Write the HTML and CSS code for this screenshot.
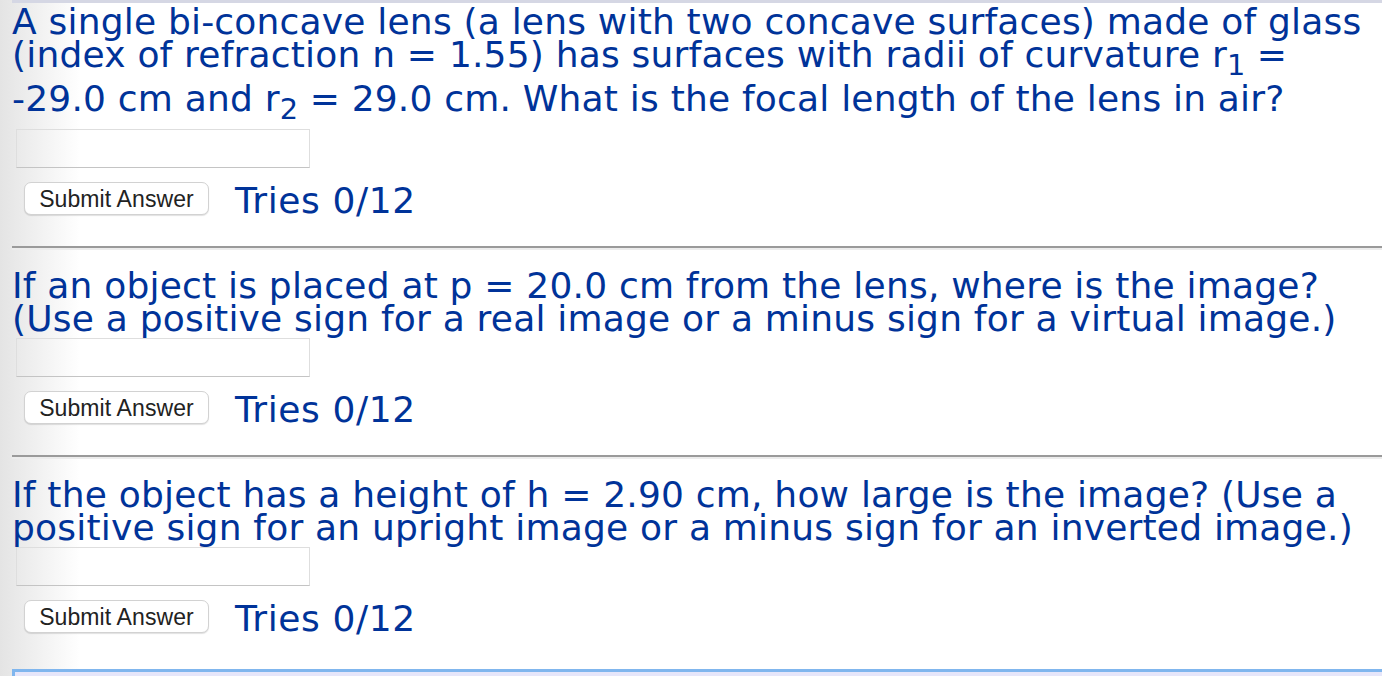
FILE: index.html
```html
<!DOCTYPE html>
<html lang="en">
<head>
<meta charset="utf-8">
<title>Lens problem</title>
<link rel="stylesheet" href="styles.css">
</head>
<body>
<div class="page">
  <div class="top-rule"></div>

  <section class="question">
    <p class="prompt">A single bi-concave lens (a lens with two concave surfaces) made of glass (index of refraction n = 1.55) has surfaces with radii of curvature r<sub>1</sub> = -29.0&nbsp;cm and r<sub>2</sub> = 29.0 cm. What is the focal length of the lens in air?</p>
    <input class="answer" type="text">
    <div class="actions">
      <button class="submit" type="button">Submit Answer</button>
      <span class="tries">Tries 0/12</span>
    </div>
  </section>
  <hr class="divider">

  <section class="question">
    <p class="prompt">If an object is placed at p = 20.0 cm from the lens, where is the image? (Use a positive sign for a real image or a minus sign for a virtual image.)</p>
    <input class="answer" type="text">
    <div class="actions">
      <button class="submit" type="button">Submit Answer</button>
      <span class="tries">Tries 0/12</span>
    </div>
  </section>
  <hr class="divider">

  <section class="question">
    <p class="prompt">If the object has a height of h = 2.90 cm, how large is the image? (Use a positive sign for an upright image or a minus sign for an inverted image.)</p>
    <input class="answer" type="text">
    <div class="actions">
      <button class="submit" type="button">Submit Answer</button>
      <span class="tries">Tries 0/12</span>
    </div>
  </section>

  <div class="next-box"></div>
</div>
</body>
</html>
```
FILE: styles.css
```css
html, body {
  margin: 0;
  padding: 0;
}

body {
  background: linear-gradient(to right, #e4e4e4 0, #ffffff 80px);
  min-height: 676px;
  overflow: hidden;
  font-family: "DejaVu Sans", Verdana, sans-serif;
  color: #003399;
}

.page {
  padding-left: 12px;
}

.top-rule {
  height: 3px;
  background: #d5d7e4;
}

.question {
  padding-top: 2px;
}

.prompt {
  margin: 0 16px 0 0;
  font-size: 36px;
  line-height: 33px;
  letter-spacing: 0.2px;
}

.prompt sub {
  font-size: 0.8em;
  letter-spacing: 0;
}

.answer {
  display: block;
  box-sizing: border-box;
  width: 294px;
  height: 39px;
  margin: 3px 0 0 4px;
  padding: 0 6px;
  background: transparent;
  border: 1px solid #dedede;
  border-bottom-color: #c4c4c4;
  border-radius: 0;
  font-size: 20px;
}

.actions {
  display: flex;
  align-items: flex-start;
  gap: 26px;
  margin: 14px 0 0 12px;
}

.submit {
  box-sizing: border-box;
  width: 185px;
  height: 33px;
  padding: 2px 0 0;
  background: #ffffff;
  border: 1px solid #d2d2d2;
  border-radius: 7px;
  box-shadow: 0 1px 1px rgba(0, 0, 0, 0.12);
  font-family: "Liberation Sans", Arial, sans-serif;
  font-size: 23px;
  letter-spacing: 0.1px;
  color: #222222;
}

.tries {
  margin-top: 2px;
  font-size: 36px;
  line-height: 33px;
  letter-spacing: 0.6px;
}

.divider {
  margin: 29px 0 17px 0;
  height: 0;
  border: 0;
  border-top: 2px solid #9a9a9a;
  border-bottom: 2px solid #ececec;
}

.next-box {
  margin-top: 34px;
  height: 20px;
  background: #e6e6fa;
  border-top: 3px solid #80b6ee;
  border-left: 3px solid #80b6ee;
}
```
